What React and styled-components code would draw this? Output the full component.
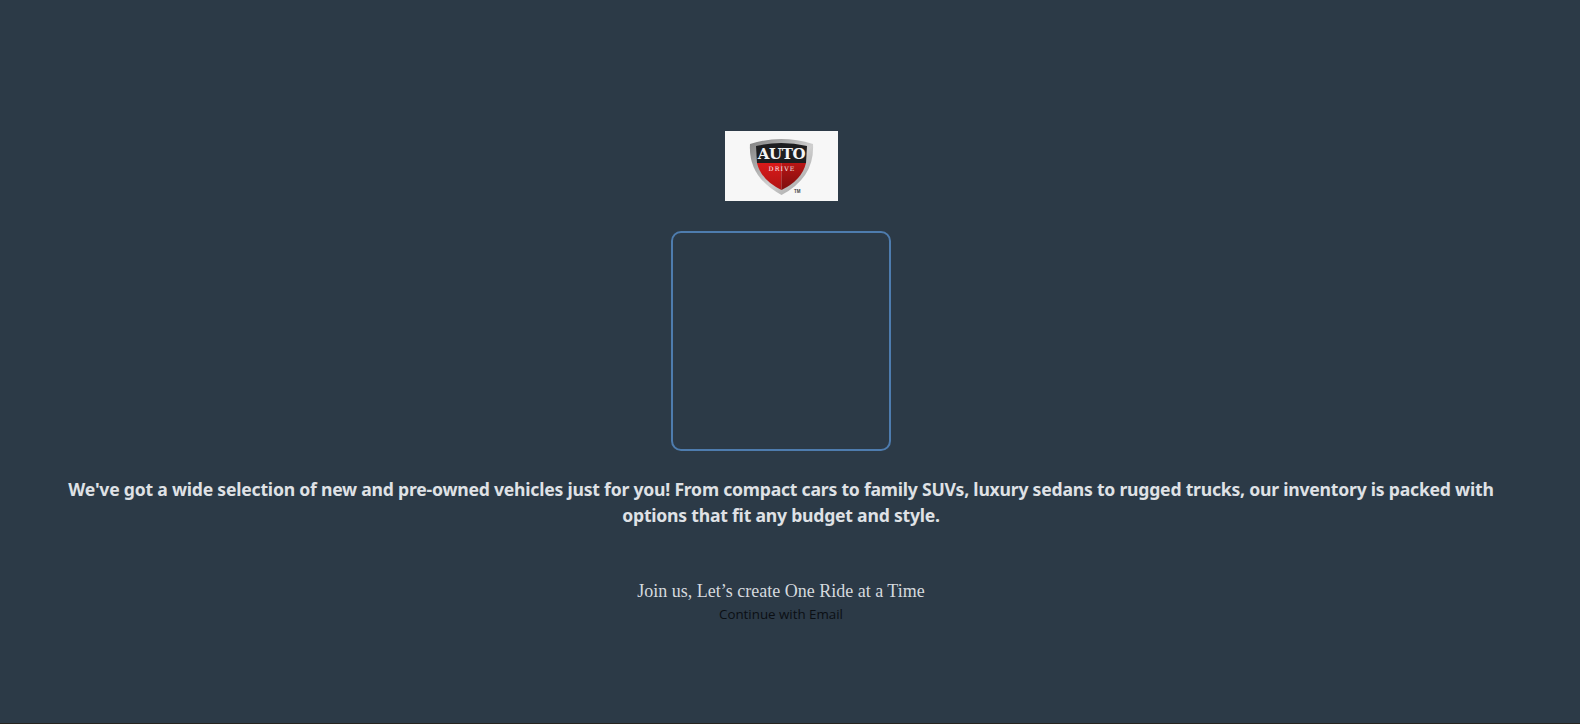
import React from 'react';
import styled, { createGlobalStyle } from 'styled-components';

const GlobalStyle = createGlobalStyle`
  html, body {
    margin: 0;
    padding: 0;
    background: #26241f;
    overflow: hidden;
  }
`;

const Page = styled.main`
  height: 723px;
  background: #2c3a47;
  display: flex;
  flex-direction: column;
  align-items: center;
  padding: 131px 18px 0 0;
  box-sizing: border-box;
`;

const LogoCard = styled.div`
  width: 113px;
  height: 70px;
  background: #f7f7f7;
  margin-left: 1px;
`;

const Frame = styled.div`
  width: 220px;
  height: 220px;
  box-sizing: border-box;
  margin-top: 30px;
  border: 2px solid #4e7cae;
  border-radius: 10px;
`;

const Intro = styled.p`
  width: 1440px;
  margin: 25px 0 0;
  color: #dfe1e5;
  font-family: "Noto Sans", sans-serif;
  font-weight: 700;
  font-size: 17.6px;
  letter-spacing: -0.22px;
  line-height: 26px;
  text-align: center;
`;

const Tagline = styled.p`
  margin: 51px 0 0;
  color: #d5d9de;
  font-family: "Liberation Serif", serif;
  font-size: 18px;
  line-height: 24px;
`;

const EmailButton = styled.button`
  border: 0;
  padding: 0;
  margin-top: 2px;
  background: transparent;
  color: #0b0f14;
  font-family: "Open Sans", sans-serif;
  font-size: 13.33px;
  line-height: 18px;
`;

function ShieldLogo() {
  return (
    <svg width="113" height="70" viewBox="0 0 113 70">
      <defs>
        <linearGradient id="rim" x1="0" x2="1" y1="0" y2="1">
          <stop offset="0" stopColor="#7f7f7f" />
          <stop offset="0.55" stopColor="#cfcfcf" />
          <stop offset="1" stopColor="#9a9a9a" />
        </linearGradient>
        <linearGradient id="redLeft" x1="0" x2="0" y1="0" y2="1">
          <stop offset="0" stopColor="#d91a1a" />
          <stop offset="1" stopColor="#b01313" />
        </linearGradient>
        <linearGradient id="redRight" x1="0" x2="0" y1="0" y2="1">
          <stop offset="0" stopColor="#b81515" />
          <stop offset="1" stopColor="#7e0e0e" />
        </linearGradient>
      </defs>
      <path d="M25 13 Q56 3 88 13 Q90 46 56.5 64 Q23 46 25 13 Z" fill="url(#rim)" />
      <path d="M31 15 Q56 9 82 15 L81 32 H32 Z" fill="#1d1d1f" />
      <path d="M32 32 H56.5 V59 Q36 49 32 32 Z" fill="url(#redLeft)" />
      <path d="M56.5 32 H81 Q77 49 56.5 59 Z" fill="url(#redRight)" />
      <text x="56.5" y="28" textAnchor="middle" fontFamily="DejaVu Serif, serif" fontWeight="700" fontSize="15" letterSpacing="-0.3" fill="#f4f4f4">AUTO</text>
      <text x="57" y="40" textAnchor="middle" fontFamily="DejaVu Serif, serif" fontSize="6.2" letterSpacing="1.2" fill="#fbf1f1">DRIVE</text>
      <text x="69" y="62" fontFamily="Liberation Sans, sans-serif" fontWeight="700" fontSize="4.5" fill="#444">TM</text>
    </svg>
  );
}

export default function App() {
  return (
    <>
      <GlobalStyle />
      <Page>
        <LogoCard>
          <ShieldLogo />
        </LogoCard>
        <Frame />
        <Intro>
          We've got a wide selection of new and pre-owned vehicles just for you! From compact cars to family SUVs, luxury sedans to rugged trucks, our inventory is packed with options that fit any budget and style.
        </Intro>
        <Tagline>Join us, Let’s create One Ride at a Time</Tagline>
        <EmailButton>Continue with Email</EmailButton>
      </Page>
    </>
  );
}
